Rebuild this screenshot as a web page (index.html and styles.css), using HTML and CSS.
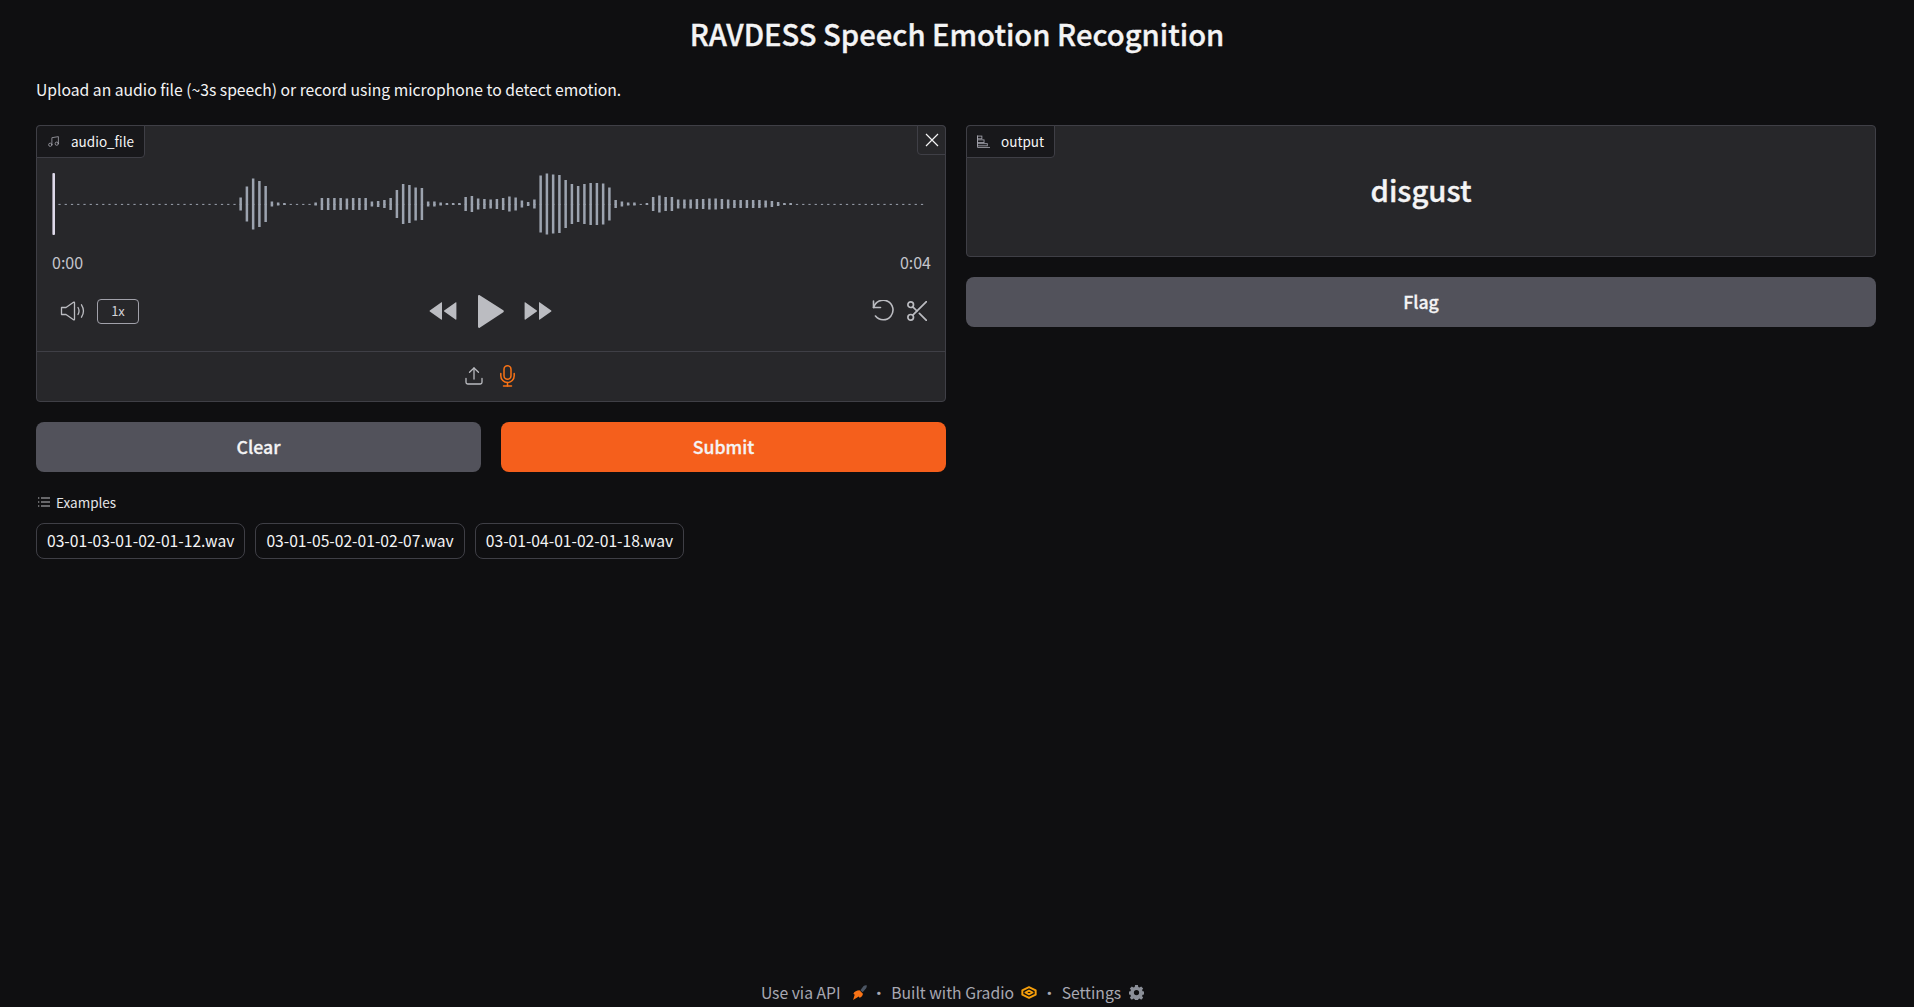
FILE: index.html
```html
<!DOCTYPE html>
<html lang="en">
<head>
<meta charset="utf-8">
<title>RAVDESS Speech Emotion Recognition</title>
<link rel="stylesheet" href="styles.css">
</head>
<body>
<main class="app">
  <h1 class="title">RAVDESS Speech Emotion Recognition</h1>
  <p class="intro">Upload an audio file (~3s speech) or record using microphone to detect emotion.</p>
  <div class="columns">
    <section class="col">
      <div class="block audio">
        <div class="label">
          <svg class="label-icon" viewBox="0 0 24 24" fill="none" stroke="currentColor" stroke-width="1.5" stroke-linecap="round" stroke-linejoin="round"><path d="M9 18V5l12-2v13"/><circle cx="6" cy="18" r="3"/><circle cx="18" cy="16" r="3"/></svg>
          <span>audio_file</span>
        </div>
        <button class="close" aria-label="Clear">
          <svg viewBox="0 0 14 14" fill="none" stroke="currentColor" stroke-width="1.2"><path d="M1 1l12 12M13 1L1 13"/></svg>
        </button>
        <div class="player">
        <svg class="wave" viewBox="0 0 880 62" aria-hidden="true">
          <line class="wave-dots" x1="6.4" y1="31.4" x2="872" y2="31.4"/>
          <g class="wave-bars">
            <rect x="187.4" y="24.5" width="2.5" height="13"/><rect x="193.65" y="13.5" width="2.5" height="35"/><rect x="199.9" y="5.5" width="2.5" height="51"/><rect x="206.15" y="8" width="2.5" height="46"/><rect x="212.4" y="13" width="2.5" height="36"/><rect x="218.65" y="28.5" width="2.5" height="5"/><rect x="224.9" y="29.5" width="2.5" height="3"/><rect x="231.15" y="30" width="2.5" height="2"/><rect x="262.4" y="29.5" width="2.5" height="3"/>
            <rect x="268.65" y="25" width="2.5" height="12"/><rect x="274.9" y="25" width="2.5" height="12"/><rect x="281.15" y="25" width="2.5" height="12"/><rect x="287.4" y="25" width="2.5" height="12"/><rect x="293.65" y="25.5" width="2.5" height="11"/><rect x="299.9" y="25" width="2.5" height="12"/><rect x="306.15" y="25" width="2.5" height="12"/><rect x="312.4" y="25" width="2.5" height="12"/><rect x="318.65" y="28.5" width="2.5" height="5"/><rect x="324.9" y="28" width="2.5" height="6"/><rect x="331.15" y="27" width="2.5" height="8"/><rect x="337.4" y="25" width="2.5" height="12"/>
            <rect x="343.65" y="17" width="2.5" height="28"/><rect x="349.9" y="11" width="2.5" height="40"/><rect x="356.15" y="12" width="2.5" height="38"/><rect x="362.4" y="14.5" width="2.5" height="33"/><rect x="368.65" y="15" width="2.5" height="32"/><rect x="374.9" y="28.5" width="2.5" height="5"/><rect x="381.15" y="28.5" width="2.5" height="5"/><rect x="387.4" y="29.5" width="2.5" height="3"/><rect x="393.65" y="30" width="2.5" height="2"/><rect x="399.9" y="30" width="2.5" height="2"/><rect x="406.15" y="30" width="2.5" height="2"/>
            <rect x="412.4" y="24" width="2.5" height="14"/><rect x="418.65" y="23" width="2.5" height="16"/><rect x="424.9" y="25.5" width="2.5" height="11"/><rect x="431.15" y="26" width="2.5" height="10"/><rect x="437.4" y="26.5" width="2.5" height="9"/><rect x="443.65" y="26" width="2.5" height="10"/><rect x="449.9" y="25" width="2.5" height="12"/><rect x="456.15" y="23.5" width="2.5" height="15"/><rect x="462.4" y="24.5" width="2.5" height="13"/><rect x="468.65" y="27.5" width="2.5" height="7"/><rect x="474.9" y="29" width="2.5" height="4"/><rect x="481.15" y="26.5" width="2.5" height="9"/>
            <rect x="487.4" y="2.5" width="2.5" height="57"/><rect x="493.65" y="0.5" width="2.5" height="61"/><rect x="499.9" y="1.5" width="2.5" height="59"/><rect x="506.15" y="2" width="2.5" height="58"/><rect x="512.4" y="7" width="2.5" height="48"/><rect x="518.65" y="11" width="2.5" height="40"/><rect x="524.9" y="13" width="2.5" height="36"/><rect x="531.15" y="11" width="2.5" height="40"/><rect x="537.4" y="10" width="2.5" height="42"/><rect x="543.65" y="10" width="2.5" height="42"/><rect x="549.9" y="10.5" width="2.5" height="41"/><rect x="556.15" y="14.5" width="2.5" height="33"/><rect x="562.4" y="27" width="2.5" height="8"/><rect x="568.65" y="28.5" width="2.5" height="5"/><rect x="574.9" y="29.5" width="2.5" height="3"/><rect x="581.15" y="29.5" width="2.5" height="3"/><rect x="593.65" y="30" width="2.5" height="2"/>
            <rect x="599.9" y="24" width="2.5" height="14"/><rect x="606.15" y="22.5" width="2.5" height="17"/><rect x="612.4" y="24" width="2.5" height="14"/><rect x="618.65" y="24" width="2.5" height="14"/><rect x="624.9" y="26.5" width="2.5" height="9"/><rect x="631.15" y="26.5" width="2.5" height="9"/><rect x="637.4" y="26.5" width="2.5" height="9"/><rect x="643.65" y="26" width="2.5" height="10"/><rect x="649.9" y="26" width="2.5" height="10"/><rect x="656.15" y="25.5" width="2.5" height="11"/><rect x="662.4" y="25.5" width="2.5" height="11"/><rect x="668.65" y="26" width="2.5" height="10"/><rect x="674.9" y="26.5" width="2.5" height="9"/><rect x="681.15" y="27" width="2.5" height="8"/><rect x="687.4" y="27" width="2.5" height="8"/><rect x="693.65" y="27" width="2.5" height="8"/><rect x="699.9" y="27" width="2.5" height="8"/><rect x="706.15" y="27" width="2.5" height="8"/><rect x="712.4" y="27.5" width="2.5" height="7"/><rect x="718.65" y="28" width="2.5" height="6"/><rect x="724.9" y="29" width="2.5" height="4"/><rect x="731.15" y="30" width="2.5" height="2"/><rect x="737.4" y="30" width="2.5" height="2"/>
          </g>
          <rect class="wave-head" x="0.4" y="0" width="2.6" height="62" rx="1"/>
        </svg>
        <div class="times"><span>0:00</span><span>0:04</span></div>
        <div class="controls">
          <div class="ctrl-left">
            <svg class="ico-vol" viewBox="0 0 25 20" fill="none" stroke="currentColor" stroke-width="1.3" stroke-linejoin="round" stroke-linecap="round"><path d="M1 6.5h4.5L13 1.2c.5-.3 1 0 1 .6v16.4c0 .6-.5.9-1 .6l-7.500-5.300H1z"/><path d="M17.500 6.500c1.300 2.200 1.300 4.800 0 7"/><path d="M21 3.800c2.400 3.800 2.400 8.600 0 12.400"/></svg>
            <button class="speed">1x</button>
          </div>
          <div class="ctrl-mid">
            <svg class="ico-skip" viewBox="0 0 28 18" fill="currentColor"><path d="M13 0.800v16.400c0 .5-.5.6-.9.300L.8 9.600c-.4-.3-.4-.9 0-1.200L12.100.5c.4-.3.9-.2.900.3z"/><path d="M27.400 0.800v16.400c0 .5-.5.6-.9.300L15.200 9.600c-.4-.3-.4-.9 0-1.200L26.500.5c.4-.3.900-.2.900.3z"/></svg>
            <svg class="ico-play" viewBox="0 0 26 33" fill="currentColor"><path d="M0 1.200C0 .3 1 -.2 1.700.3l23.600 15c.7.500.7 1.500 0 2L1.700 32.700C1 33.200 0 32.700 0 31.800z"/></svg>
            <svg class="ico-skip" viewBox="0 0 28 18" fill="currentColor"><path d="M.6 0.800v16.400c0 .5.5.6.9.300l11.300-7.900c.4-.3.4-.9 0-1.200L1.500.5C1.100.2.600.3.600.8z"/><path d="M15 0.800v16.400c0 .5.5.6.9.300l11.300-7.900c.4-.3.4-.9 0-1.200L15.900.5c-.4-.3-.9-.2-.9.3z"/></svg>
          </div>
          <div class="ctrl-right">
            <svg class="ico-undo" viewBox="0 0 24 22" fill="none" stroke="currentColor" stroke-width="1.600" stroke-linecap="round" stroke-linejoin="round"><path d="M1.500 7.500h7"/><path d="M1.500 7.500V1"/><path d="M1.700 7.500A9.800 9.800 0 1 1 3.500 16"/></svg>
            <svg class="ico-cut" viewBox="0 0 20 20" fill="none" stroke="currentColor" stroke-width="1.700" stroke-linecap="round"><circle cx="3.700" cy="3.700" r="2.800"/><circle cx="3.700" cy="16.300" r="2.800"/><path d="M19.500.5L5.800 14.200"/><path d="M12.400 12.400l7.100 7.100"/><path d="M5.800 5.800l4.200 4.200"/></svg>
          </div>
        </div>
        </div>
        <div class="sources">
          <svg class="ico-upload" viewBox="0 0 18 18" fill="none" stroke="currentColor" stroke-width="1.300" stroke-linecap="round" stroke-linejoin="round"><path d="M1 11.500v3.800c0 1 .7 1.700 1.700 1.700h12.600c1 0 1.700-.7 1.700-1.700v-3.800"/><path d="M9 12V1"/><path d="M4.500 5.300L9 1l4.500 4.300"/></svg>
          <svg class="ico-mic" viewBox="0 0 15 22" fill="none" stroke="currentColor" stroke-width="1.500" stroke-linecap="round" stroke-linejoin="round"><rect x="4" y="0.800" width="7" height="13.500" rx="3.500"/><path d="M.8 8.500v2.300a6.700 6.700 0 0 0 13.400 0V8.500"/><path d="M7.500 17.500v3.500"/><path d="M3.500 21h8"/></svg>
        </div>
      </div>
      <div class="actions">
        <button class="btn btn-secondary">Clear</button>
        <button class="btn btn-primary">Submit</button>
      </div>
      <div class="examples">
        <div class="examples-label">
          <svg viewBox="0 0 12 10" fill="none" stroke="currentColor" stroke-width="0.9"><path d="M3 1h9M3 5h9M3 9h9"/><path d="M0 1h1.300M0 5h1.300M0 9h1.300"/></svg>
          <span>Examples</span>
        </div>
        <div class="examples-row">
          <button class="chip">03-01-03-01-02-01-12.wav</button>
          <button class="chip">03-01-05-02-01-02-07.wav</button>
          <button class="chip">03-01-04-01-02-01-18.wav</button>
        </div>
      </div>
    </section>
    <section class="col">
      <div class="block output">
        <div class="label">
          <svg class="label-icon" viewBox="0 0 12 12" fill="none" stroke="currentColor" stroke-width="0.8"><path d="M.5 .5v11h11.500"/><rect x=".5" y="1" width="4" height="2.500"/><rect x=".5" y="4.500" width="6" height="2.500"/><rect x=".5" y="8" width="9" height="2"/></svg>
          <span>output</span>
        </div>
        <div class="result">disgust</div>
      </div>
      <button class="btn btn-secondary">Flag</button>
    </section>
  </div>
</main>
<footer class="footer">
  <span>Use via API</span>
  <svg class="ico-rocket" viewBox="0 0 14 14"><path fill="#f97316" d="M7 5l3.200 3.200c0 1.700-1.500 3.300-3.200 3.800l-.7-1.300L1 14l1.500-5L1.300 8.200C2 6.500 4.500 5 7 5z"/><path fill="#4b5563" d="M7.800 4.800L10.800 1c.8-.7 2.200-1 2.900-.7.300.8 0 2.200-.7 3L10 6.800z"/></svg>
  <span class="dot">·</span>
  <span>Built with Gradio</span>
  <svg class="ico-logo" viewBox="0 0 18 14" fill="none" stroke="#f59e0b" stroke-width="2.200" stroke-linejoin="round"><path d="M9 1l7.500 3.500v5L9 13 1.500 9.500v-5z"/><path d="M5 7l4-2 4 2-4 2z"/></svg>
  <span class="dot">·</span>
  <span>Settings</span>
  <svg class="ico-gear" viewBox="0 0 16 16"><path fill="#8b8f98" fill-rule="evenodd" d="M6.500 0h3l.4 2.100 1.300.6L13 1.500l2.100 2.100-1.200 1.800.6 1.300 2 .4v3l-2 .4-.6 1.300 1.200 1.800-2.100 2.100-1.800-1.200-1.300.6-.4 2.100h-3l-.4-2.100-1.300-.6L3 15.700.9 13.600l1.200-1.800-.6-1.300-2-.4v-3l2-.4.6-1.300L.9 3.600 3 1.500l1.800 1.200 1.300-.6zM8 5.300a2.800 2.800 0 1 0 0 5.600 2.800 2.800 0 0 0 0-5.600z"/></svg>
</footer>
</body>
</html>
```
FILE: styles.css
```css
* { box-sizing: border-box; }
html, body { margin: 0; height: 100%; }
body {
  min-height: 1007px;
  display: flex;
  flex-direction: column;
  background: #0f0f11;
  color: #f4f4f5;
  font-family: "Noto Sans CJK SC", "Noto Sans", sans-serif;
  font-size: 15.7px;
  overflow: hidden;
}
button { font-family: inherit; color: inherit; }
.app { flex: 1; padding: 0 36px; }
.title {
  margin: 0;
  padding-top: 13px;
  height: 75px;
  font-size: 29.2px;
  line-height: 40px;
  font-weight: 500;
  -webkit-text-stroke: 0.35px currentColor;
  text-align: center;
}
.intro { margin: 0; height: 50px; line-height: 30px; }
.columns { display: grid; grid-template-columns: 910px 910px; gap: 20px; }
.col { display: flex; flex-direction: column; min-width: 0; }
.block {
  position: relative;
  background: #27272a;
  border: 1px solid #3f3f46;
  border-radius: 4px;
}
.label {
  position: absolute;
  top: -1px;
  left: -1px;
  height: 33px;
  display: flex;
  align-items: center;
  gap: 11px;
  padding: 0 10px 1px;
  background: #18181b;
  border: 1px solid #3f3f46;
  border-radius: 4px 0 4px 0;
  font-size: 13.5px;
  line-height: 20px;
}
.label-icon { width: 13px; height: 13px; color: #a1a1aa; }
.close {
  position: absolute;
  top: -1px;
  right: -1px;
  width: 29px;
  height: 30px;
  padding: 0;
  display: flex;
  align-items: center;
  justify-content: center;
  background: #27272a;
  border: 1px solid #3f3f46;
  border-radius: 0 4px 0 4px;
}
.close svg { width: 14px; height: 14px; }
.audio { height: 277px; padding-top: 47px; display: flex; flex-direction: column; }
.player { padding: 0 15px; }
.wave { display: block; width: 880px; height: 62px; }
.wave-dots { stroke: #9ca3af; stroke-width: 1; stroke-dasharray: 2.25 4; }
.wave-bars { fill: #9ca3af; }
.wave-head { fill: #ded9ea; }
.times {
  display: flex;
  justify-content: space-between;
  height: 20px;
  margin-top: 17px;
  line-height: 20px;
  width: 879px;
  color: #c4c4cc;
  font-size: 16px;
}
.controls {
  display: grid;
  grid-template-columns: 1fr auto 1fr;
  align-items: center;
  height: 40px;
  margin-top: 19px;
  color: #bbbcc1;
}
.ctrl-left { display: flex; align-items: center; gap: 11px; padding-left: 8px; }
.ctrl-mid { display: flex; align-items: center; gap: 21px; padding-right: 1px; }
.ctrl-mid .ico-play + .ico-skip { margin-left: -1px; }
.ctrl-right { display: flex; justify-content: flex-end; align-items: center; gap: 11px; padding-right: 3px; }
.ico-vol { width: 26px; height: 20px; }
.speed {
  width: 42px;
  height: 25px;
  padding: 0;
  background: none;
  border: 1px solid #a1a1aa;
  border-radius: 4px;
  font-size: 13px;
  line-height: 20px;
  color: #d4d4d8;
}
.ico-skip { width: 28px; height: 18px; }
.ico-play { width: 26px; height: 33px; }
.ico-undo { width: 24px; height: 22px; }
.ico-cut { width: 20px; height: 20px; }
.sources {
  margin-top: auto;
  height: 50px;
  border-top: 1px solid #3f3f46;
  display: flex;
  align-items: center;
  justify-content: center;
  gap: 17px;
  padding: 0 2px 1px 0;
  color: #bbbcc1;
}
.ico-upload { width: 18px; height: 18px; }
.ico-mic { width: 15px; height: 22px; color: #f97316; }
.actions { display: grid; grid-template-columns: 1fr 1fr; gap: 20px; margin-top: 20px; }
.btn {
  height: 50px;
  border: 0;
  border-radius: 8px;
  padding: 0 0 2px;
  font-size: 17.7px;
  font-weight: 500;
  -webkit-text-stroke: 0.3px currentColor;
  color: #f4f4f5;
}
.btn-secondary { background: #52525b; }
.btn-primary { background: #f55f1c; }
.examples { margin-top: 20px; }
.examples-label {
  display: flex;
  align-items: center;
  gap: 6px;
  height: 22px;
  padding: 0 0 2px 2px;
  font-size: 13.5px;
  color: #e4e4e7;
}
.examples-label svg { width: 12px; height: 10px; color: #d4d4d8; }
.examples-row { display: flex; gap: 10px; margin-top: 9px; }
.chip {
  height: 36px;
  padding: 0 10px 1px;
  background: none;
  border: 1px solid #3f3f46;
  border-radius: 8px;
  font-size: 15.65px;
  line-height: 20px;
}
.output { height: 132px; margin-bottom: 20px; }
.result {
  text-align: center;
  padding-top: 41px;
  font-size: 29.3px;
  line-height: 44px;
  font-weight: 500;
  -webkit-text-stroke: 0.35px currentColor;
}
.footer {
  height: 30px;
  flex: none;
  display: flex;
  align-items: center;
  justify-content: center;
  padding: 1px 9px 0 0;
  color: #a8a8b2;
  line-height: 20px;
}
.dot { margin: 0 4.5px; }
.ico-rocket { width: 15px; height: 15px; margin-left: 11px; }
.ico-logo { width: 16px; height: 13px; margin-left: 7px; }
.ico-gear { width: 15px; height: 15px; margin-left: 8px; }
```
